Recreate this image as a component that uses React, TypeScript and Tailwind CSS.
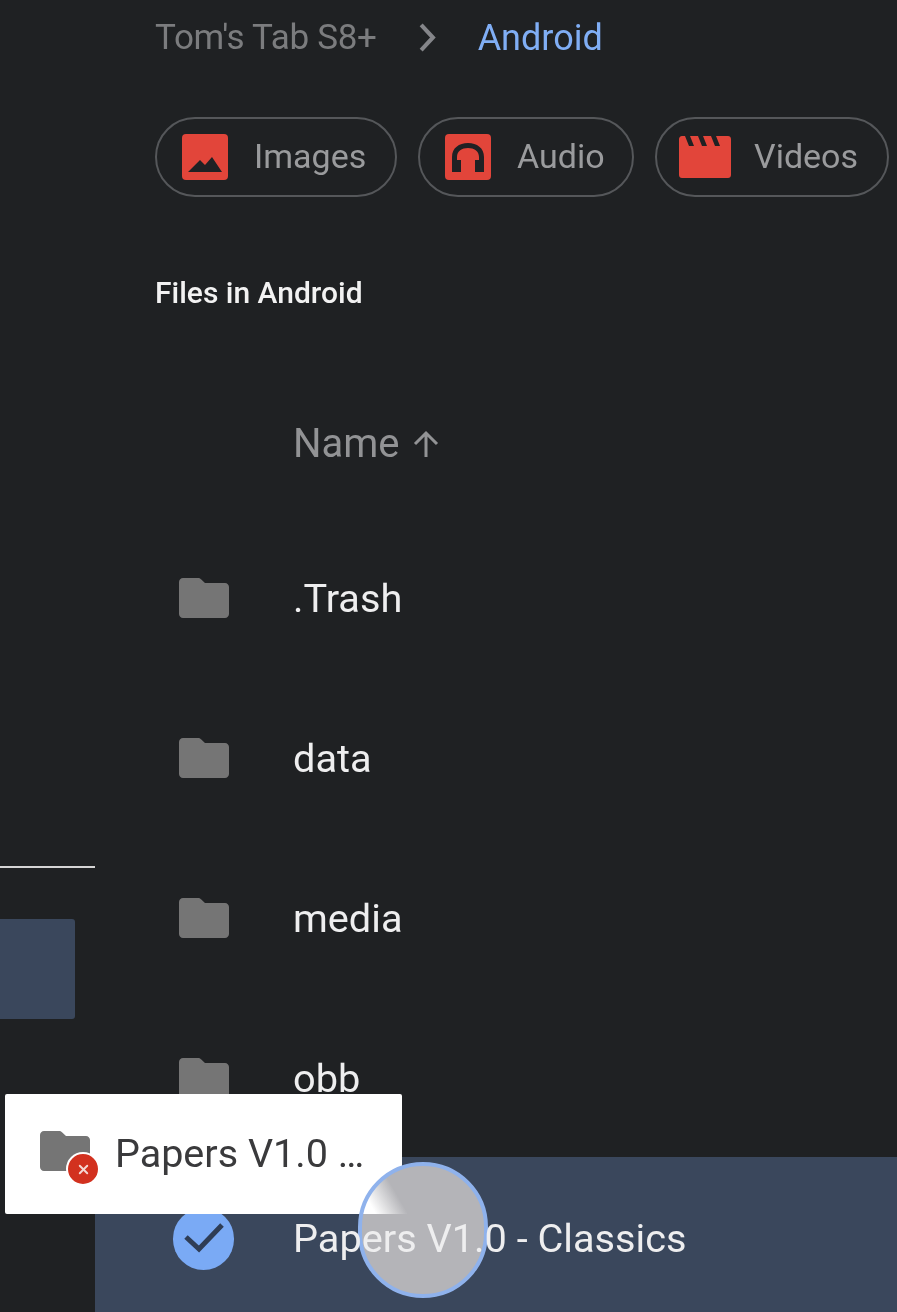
import { X } from "lucide-react";

const FONT = "font-['Roboto','Liberation_Sans',sans-serif]";

function FolderIcon({ className }: { className: string }) {
  return (
    <svg viewBox="0 0 50 40" className={className} aria-hidden="true">
      <path
        d="M4 0h15c1.200 0 2.200.5 3 1.300L26 5h20c2.200 0 4 1.800 4 4v27c0 2.200-1.800 4-4 4H4c-2.200 0-4-1.800-4-4V4c0-2.200 1.800-4 4-4z"
        fill="currentColor"
      />
    </svg>
  );
}

function ImagesIcon() {
  return (
    <svg viewBox="0 0 46 46" className="h-[46px] w-[46px]" aria-hidden="true">
      <rect width="46" height="46" rx="4" fill="#e2453a" />
      <path d="M6 38l12-12 5 5 7-8 10 15z" fill="#202124" />
    </svg>
  );
}

function AudioIcon() {
  return (
    <svg viewBox="0 0 46 46" className="h-[46px] w-[46px]" aria-hidden="true">
      <rect width="46" height="46" rx="4" fill="#e2453a" />
      <path
        d="M7 38V23C7 14 14 9 23 9s16 5 16 14v15h-9V26h4v-3c0-6-5-9-11-9s-11 3-11 9v3h4v12z"
        fill="#202124"
      />
    </svg>
  );
}

function VideosIcon() {
  return (
    <svg viewBox="0 0 52 42" className="h-[42px] w-[52px]" aria-hidden="true">
      <path
        d="M0 3c0-1.500 1.200-3 3-3h3l4 10h5L11 0h8l4 10h5L24 0h8l4 10h5L37 0h12c1.700 0 3 1.300 3 3v36c0 1.700-1.300 3-3 3H3c-1.700 0-3-1.300-3-3z"
        fill="#e2453a"
      />
    </svg>
  );
}

function Chip({ icon, label, className, gap }: { icon: React.ReactNode; label: string; className: string; gap: string }) {
  return (
    <div className={`flex h-[80px] items-center rounded-[40px] border-2 border-[#55575a] ${className}`}>
      {icon}
      <span className={`pb-[2px] text-[34px] leading-none text-[#9a9b9d] ${gap}`}>{label}</span>
    </div>
  );
}

function FileRow({ name, selected }: { name: string; selected?: boolean }) {
  return (
    <div className={selected ? "-mt-[2px] flex h-[164px] items-center bg-[#3a475c]" : "flex h-[160px] items-center"}>
      <div className="w-[198px] shrink-0 pl-[84px]">
        {selected ? (
          <span className="-ml-[6px] flex h-[62px] w-[61px] items-center justify-center rounded-full bg-[#7aaaf5]">
            <svg viewBox="0 0 61 62" className="h-[62px] w-[61px]" fill="none" stroke="#2f3d55" strokeWidth="5" aria-hidden="true">
              <path d="M13 29l13 12 23-24" />
            </svg>
          </span>
        ) : (
          <FolderIcon className="-mt-[2px] h-[40px] w-[50px] text-[#757575]" />
        )}
      </div>
      <span className="relative z-20 text-[39.7px] leading-none text-[#eeeeef]">{name}</span>
    </div>
  );
}

export default function App() {
  return (
    <div className={`relative flex h-[1312px] w-[897px] overflow-hidden bg-[#1f2123] blur-[0.6px] ${FONT}`}>
      <aside className="w-[95px] shrink-0 pt-[866px]">
        <div className="h-[2px] w-full bg-[#d5d5d5]" />
        <div className="mt-[51px] h-[100px] w-[75px] rounded-r-[3px] bg-[#3a475c]" />
      </aside>

      <main className="min-w-0 flex-1">
        <div className="flex h-[75px] items-center pl-[60px]">
          <span className="text-[35px] leading-none tracking-[-0.3px] text-[#7b7c7e]">Tom's Tab S8+</span>
          <svg viewBox="0 0 20 32" className="ml-[41px] h-[29px] w-[19px]" fill="none" stroke="#85868a" strokeWidth="4.500" aria-hidden="true">
            <path d="M3 2l13 14L3 30" />
          </svg>
          <span className="ml-[41px] text-[36px] leading-none text-[#80aef5]">Android</span>
        </div>

        <div className="mt-[42px] flex gap-[21px] pl-[60px]">
          <Chip icon={<ImagesIcon />} label="Images" className="w-[242px] pl-[25px]" gap="ml-[26px]" />
          <Chip icon={<AudioIcon />} label="Audio" className="w-[216px] pl-[25px]" gap="ml-[26px]" />
          <Chip icon={<VideosIcon />} label="Videos" className="w-[234px] pl-[22px]" gap="ml-[23px]" />
        </div>

        <h2 className="mt-[79px] pl-[60px] text-[30px] font-medium leading-[34px] text-[#f2f2f2]">
          Files in Android
        </h2>

        <div className="mt-[109px] flex h-[50px] items-center pl-[198px] text-[40px] leading-none text-[#929395]">
          Name
          <svg viewBox="0 0 28 28" className="ml-[12px] h-[28px] w-[28px]" fill="none" stroke="#929395" strokeWidth="3" aria-hidden="true">
            <path d="M14 27V3M3 14L14 3l11 11" />
          </svg>
        </div>

        <div className="mt-[50px]">
          <FileRow name=".Trash" />
          <FileRow name="data" />
          <FileRow name="media" />
          <FileRow name="obb" />
          <FileRow name="Papers V1.0 - Classics" selected />
        </div>
      </main>

      {/* drag shadow */}
      <div className="absolute left-[5px] top-[1094px] z-[5] flex h-[120px] w-[397px] items-center rounded-[2px] bg-white pl-[35px]">
        <div className="relative -mt-[6px] h-[40px] w-[50px] shrink-0">
          <FolderIcon className="h-[40px] w-[50px] text-[#757575]" />
          <span className="absolute left-[26px] top-[21px] flex h-[34px] w-[34px] items-center justify-center rounded-full border-2 border-white bg-[#d2311f]">
            <X size={15} strokeWidth={3} className="text-[#f5d8d4]" />
          </span>
        </div>
        <span className="ml-[25px] text-[39.500px] leading-none text-[#3a3a3c]">Papers V1.0 …</span>
      </div>

      {/* touch indicator, sits over the drag shadow but under the row label */}
      <div className="absolute left-[358px] top-[1162px] z-10 h-[136px] w-[130px] rounded-full border-[4px] border-[#8fb2ec] bg-[#b4b4b8] bg-[linear-gradient(60deg,#ffffff_12px,#b4b4b8_40px)] bg-[length:100%_48px] bg-no-repeat [background-origin:padding-box]" />
    </div>
  );
}
